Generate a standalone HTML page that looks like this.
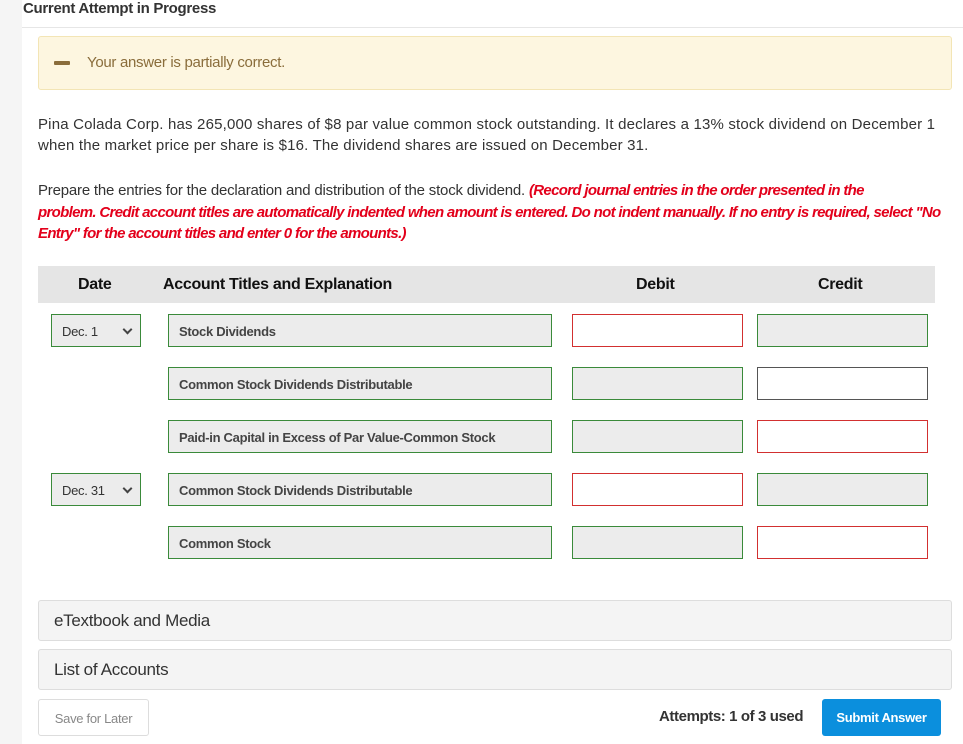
<!DOCTYPE html>
<html><head><style>
body{margin:0;width:963px;height:744px;background:#fff;font-family:"Liberation Sans",sans-serif;position:relative;overflow:hidden;color:#222}
.a{position:absolute;box-sizing:border-box}
.f{position:absolute;box-sizing:border-box;height:33px;border:1px solid #3a8a3a;background:#ececec;font-size:13px;font-weight:bold;color:#444;padding:9px 10px 0;letter-spacing:-0.3px}
.r{border-color:#d23030;background:#fff}
.w{border-color:#555;background:#fff}
.sel{width:90px;left:51px;font-weight:normal;color:#333}
.sel:after{content:"";position:absolute;right:9px;top:11px;width:5px;height:5px;border-right:2px solid #444;border-bottom:2px solid #444;transform:rotate(45deg)}
.acc{left:168px;width:384px}
.d{left:572px;width:171px}
.c{left:757px;width:171px}
.nw{white-space:nowrap}
</style></head><body>
<div class="a" style="left:0;top:0;width:22px;height:744px;background:#f5f5f5"></div>
<div class="a" style="left:22px;top:27px;width:941px;height:1px;background:#e6e6e6"></div>
<div class="a" style="left:23px;top:0;font-size:15px;font-weight:bold;color:#333;letter-spacing:-0.3px">Current Attempt in Progress</div>
<div class="a" style="left:38px;top:36px;width:914px;height:54px;background:#fdf6e0;border:1px solid #f3e5b5;border-radius:3px"></div>
<div class="a" style="left:54px;top:61px;width:16px;height:4px;background:#8a6d3b;border-radius:1px"></div>
<div class="a" style="left:87px;top:54px;font-size:15px;color:#8a6d3b;letter-spacing:-0.3px">Your answer is partially correct.</div>
<div class="a nw" style="left:38px;top:114px;font-size:15px;line-height:21px;color:#333;letter-spacing:0.18px">Pina Colada Corp. has 265,000 shares of $8 par value common stock outstanding. It declares a 13% stock dividend on December 1<br>when the market price per share is $16. The dividend shares are issued on December 31.</div>
<div class="a nw" style="left:38px;top:180px;font-size:15px;line-height:21.5px;color:#333;letter-spacing:-0.2px">Prepare the entries for the declaration and distribution of the stock dividend. <b style="color:#e3001b;font-style:italic;letter-spacing:-0.68px">(Record journal entries in the order presented in the<br>problem. Credit account titles are automatically indented when amount is entered. Do not indent manually. If no entry is required, select "No<br>Entry" for the account titles and enter 0 for the amounts.)</b></div>
<div class="a" style="left:38px;top:266px;width:897px;height:37px;background:#e5e5e5;font-size:16px;font-weight:bold;color:#111;letter-spacing:-0.3px">
<span class="a" style="left:40px;top:10px">Date</span>
<span class="a" style="left:125px;top:10px">Account Titles and Explanation</span>
<span class="a" style="left:598px;top:10px">Debit</span>
<span class="a" style="left:780px;top:10px">Credit</span></div>

<div class="f sel" style="top:314px">Dec. 1</div>
<div class="f acc" style="top:314px">Stock Dividends</div>
<div class="f d r" style="top:314px"></div>
<div class="f c" style="top:314px"></div>

<div class="f acc" style="top:367px">Common Stock Dividends Distributable</div>
<div class="f d" style="top:367px"></div>
<div class="f c w" style="top:367px"></div>

<div class="f acc" style="top:420px">Paid-in Capital in Excess of Par Value-Common Stock</div>
<div class="f d" style="top:420px"></div>
<div class="f c r" style="top:420px"></div>

<div class="f sel" style="top:473px">Dec. 31</div>
<div class="f acc" style="top:473px">Common Stock Dividends Distributable</div>
<div class="f d r" style="top:473px"></div>
<div class="f c" style="top:473px"></div>

<div class="f acc" style="top:526px">Common Stock</div>
<div class="f d" style="top:526px"></div>
<div class="f c r" style="top:526px"></div>

<div class="a" style="left:38px;top:600px;width:914px;height:41px;background:#f4f4f4;border:1px solid #ddd;border-radius:3px;font-size:17px;color:#333;padding:10px 15px;letter-spacing:-0.3px">eTextbook and Media</div>
<div class="a" style="left:38px;top:649px;width:914px;height:41px;background:#f4f4f4;border:1px solid #ddd;border-radius:3px;font-size:17px;color:#333;padding:10px 15px;letter-spacing:-0.3px">List of Accounts</div>
<div class="a" style="left:38px;top:699px;width:111px;height:37px;border:1px solid #ddd;border-radius:3px;font-size:13px;color:#888;padding:11px 0 0;text-align:center;letter-spacing:-0.3px">Save for Later</div>
<div class="a" style="left:659px;top:708px;font-size:15px;font-weight:bold;color:#333;letter-spacing:-0.4px">Attempts: 1 of 3 used</div>
<div class="a" style="left:822px;top:699px;width:119px;height:37px;background:#0b8fdd;border-radius:3px;font-size:13px;font-weight:bold;color:#fff;padding:11px 0 0;text-align:center;letter-spacing:-0.3px">Submit Answer</div>
</body></html>
